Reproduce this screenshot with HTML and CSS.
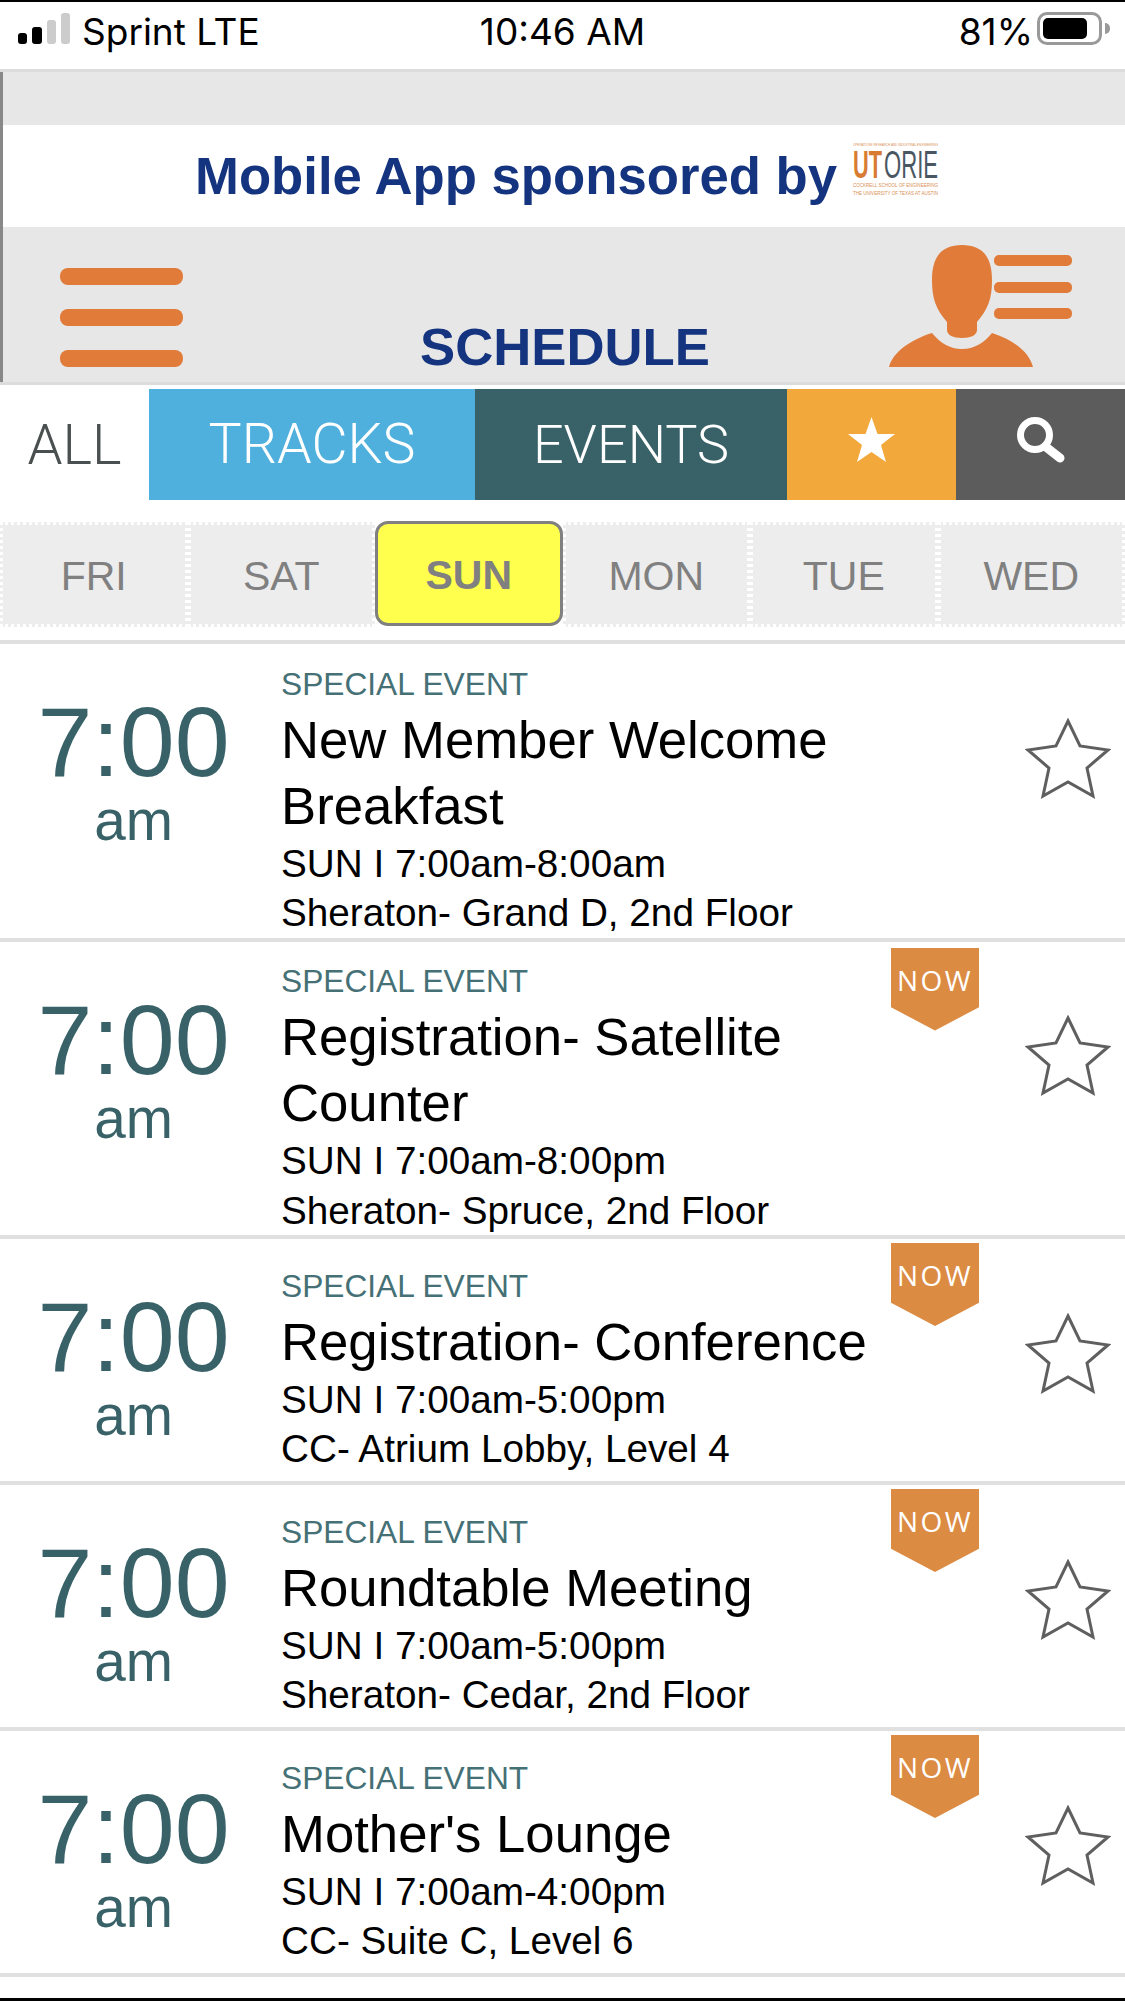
FILE: index.html
```html
<!DOCTYPE html>
<html lang="en">
<head>
<meta charset="utf-8">
<title>Schedule</title>
<link rel="stylesheet" href="styles.css">
</head>
<body>
<svg class="defs" width="0" height="0" aria-hidden="true">
  <symbol id="star" viewBox="0 0 86 81"><polygon points="43,3 55,28 83,32 62,50 68,78 43,64 18,78 24,50 3,32 31,28" fill="#fff" stroke="#5f5f5f" stroke-width="3" stroke-linejoin="miter"/></symbol>
</svg>
<div class="phone">
  <div class="status">
    <div class="status-left">
      <div class="signal"><i class="b1"></i><i class="b2"></i><i class="b3"></i><i class="b4"></i></div>
      <span>Sprint LTE</span>
    </div>
    <div class="status-time">10:46 AM</div>
    <div class="status-right">
      <span>81%</span>
      <div class="battery"><div class="battery-fill"></div></div>
      <div class="battery-nub"></div>
    </div>
  </div>

  <header class="header">
    <div class="strip"></div>
    <div class="banner">
      <span class="banner-text">Mobile App sponsored by</span>
      <svg class="logo" viewBox="0 0 85 53" width="85" height="53">
        <text class="logo-tiny" x="0" y="3" textLength="85" lengthAdjust="spacingAndGlyphs">OPERATIONS RESEARCH AND INDUSTRIAL ENGINEERING</text>
        <text class="logo-ut" x="0" y="35" textLength="29" lengthAdjust="spacingAndGlyphs">UT</text>
        <text class="logo-orie" x="31" y="35" textLength="54" lengthAdjust="spacingAndGlyphs">ORIE</text>
        <text class="logo-small" x="0" y="44" textLength="85" lengthAdjust="spacingAndGlyphs">COCKRELL SCHOOL OF ENGINEERING</text>
        <text class="logo-small" x="0" y="52" textLength="85" lengthAdjust="spacingAndGlyphs">THE UNIVERSITY OF TEXAS AT AUSTIN</text>
      </svg>
    </div>
    <nav class="nav">
      <div class="burger"><i></i><i></i><i></i></div>
      <h1 class="page-title">SCHEDULE</h1>
      <svg class="person" viewBox="889 245 184 122" width="184" height="122">
        <path fill="#e07b39" d="M962 245C981 245 992 255 992 280C992 299 988 309 977 322L977 330C977 335 971 338 962 338C953 338 947 335 947 330L947 322C936 309 932 299 932 280C932 255 943 245 962 245Z"/>
        <path fill="#e07b39" d="M889 367C893 352 910 340 932 333C940 343 950 349 962 349C974 349 984 343 992 333C1014 340 1029 352 1033 367Z"/>
        <rect x="994" y="255" width="78" height="11" rx="5" fill="#e07b39"/>
        <rect x="994" y="282" width="78" height="11" rx="5" fill="#e07b39"/>
        <rect x="994" y="308" width="78" height="11" rx="5" fill="#e07b39"/>
      </svg>
    </nav>
  </header>

  <div class="tabs">
    <div class="tab tab-all">ALL</div>
    <div class="tab tab-tracks">TRACKS</div>
    <div class="tab tab-events">EVENTS</div>
    <div class="tab tab-fav">
      <svg class="tab-icon" viewBox="0 0 47 45" width="47" height="45"><polygon fill="#fff" points="23.500,0 29.500,17 47,17 33,28 38,45 23.500,35 9,45 14,28 0,17 17.500,17"/></svg>
    </div>
    <div class="tab tab-search">
      <svg class="tab-icon" viewBox="0 0 52 46" width="52" height="46"><circle cx="20" cy="18" r="14.500" fill="none" stroke="#fff" stroke-width="7"/><path d="M31 30L45 41" fill="none" stroke="#fff" stroke-width="9" stroke-linecap="round"/></svg>
    </div>
  </div>

  <div class="days">
    <div class="day">FRI</div>
    <div class="day">SAT</div>
    <div class="day day-active">SUN</div>
    <div class="day">MON</div>
    <div class="day">TUE</div>
    <div class="day">WED</div>
  </div>

  <main class="list">
    <article class="row">
      <div class="time"><div class="time-h">7:00</div><div class="time-ap">am</div></div>
      <div class="info">
        <div class="cat">SPECIAL EVENT</div>
        <div class="name">New Member Welcome Breakfast</div>
        <div class="meta">SUN I 7:00am-8:00am</div>
        <div class="meta">Sheraton- Grand D, 2nd Floor</div>
      </div>
      <svg class="fav" width="86" height="81"><use href="#star"/></svg>
    </article>
    <article class="row row-tall">
      <div class="now"><span>NOW</span></div>
      <div class="time"><div class="time-h">7:00</div><div class="time-ap">am</div></div>
      <div class="info">
        <div class="cat">SPECIAL EVENT</div>
        <div class="name">Registration- Satellite Counter</div>
        <div class="meta">SUN I 7:00am-8:00pm</div>
        <div class="meta">Sheraton- Spruce, 2nd Floor</div>
      </div>
      <svg class="fav" width="86" height="81"><use href="#star"/></svg>
    </article>
    <article class="row">
      <div class="now"><span>NOW</span></div>
      <div class="time"><div class="time-h">7:00</div><div class="time-ap">am</div></div>
      <div class="info">
        <div class="cat">SPECIAL EVENT</div>
        <div class="name">Registration- Conference</div>
        <div class="meta">SUN I 7:00am-5:00pm</div>
        <div class="meta">CC- Atrium Lobby, Level 4</div>
      </div>
      <svg class="fav" width="86" height="81"><use href="#star"/></svg>
    </article>
    <article class="row">
      <div class="now"><span>NOW</span></div>
      <div class="time"><div class="time-h">7:00</div><div class="time-ap">am</div></div>
      <div class="info">
        <div class="cat">SPECIAL EVENT</div>
        <div class="name">Roundtable Meeting</div>
        <div class="meta">SUN I 7:00am-5:00pm</div>
        <div class="meta">Sheraton- Cedar, 2nd Floor</div>
      </div>
      <svg class="fav" width="86" height="81"><use href="#star"/></svg>
    </article>
    <article class="row">
      <div class="now"><span>NOW</span></div>
      <div class="time"><div class="time-h">7:00</div><div class="time-ap">am</div></div>
      <div class="info">
        <div class="cat">SPECIAL EVENT</div>
        <div class="name">Mother's Lounge</div>
        <div class="meta">SUN I 7:00am-4:00pm</div>
        <div class="meta">CC- Suite C, Level 6</div>
      </div>
      <svg class="fav" width="86" height="81"><use href="#star"/></svg>
    </article>
  </main>
</div>
</body>
</html>
```
FILE: styles.css
```css
* { box-sizing: border-box; }
html, body { margin: 0; padding: 0; background: #fff; }
body { font-family: "Liberation Sans", Arial, sans-serif; }
.defs { position: absolute; }
.phone {
  width: 1125px;
  height: 2001px;
  overflow: hidden;
  display: flex;
  flex-direction: column;
  border-top: 2px solid #000;
  border-bottom: 3px solid #000;
}

/* status bar */
.status {
  height: 67px;
  display: grid;
  grid-template-columns: 1fr auto 1fr;
  align-items: start;
  font-family: Inter, "Liberation Sans", sans-serif;
  font-size: 37px;
  line-height: 40px;
  color: #000;
  padding-top: 10px;
  flex: none;
}
.status-left { display: flex; align-items: flex-start; padding-left: 18px; gap: 12px; }
.signal { display: flex; align-items: flex-end; gap: 5px; height: 31px; margin-top: 1px; }
.signal i { display: block; width: 9px; border-radius: 3px; background: #000; }
.signal .b1 { height: 11px; }
.signal .b2 { height: 17px; width: 10px; }
.signal .b3 { height: 24px; background: #ccc; }
.signal .b4 { height: 31px; background: #ccc; }
.status-time { text-align: center; }
.status-right { display: flex; justify-content: flex-end; align-items: flex-start; padding-right: 15px; }
.battery {
  width: 65px;
  height: 33px;
  margin: 0 0 0 4px;
  border: 3px solid #999;
  border-radius: 10px;
  padding: 3px;
}
.battery-fill { width: 44px; height: 21px; background: #000; border-radius: 5px; }
.battery-nub { width: 5px; height: 11px; margin: 11px 0 0 3px; background: #999; border-radius: 0 5px 5px 0; }

/* header */
.header {
  flex: none;
  border-top: 3px solid #dcdcdc;
  border-bottom: 3px solid #dcdcdc;
  background: #e7e7e7;
  position: relative;
}
.header::before {
  content: "";
  position: absolute;
  left: 0;
  top: 0;
  bottom: 0;
  width: 3px;
  background: #888;
}
.strip { height: 53px; }
.banner {
  height: 102px;
  background: #fff;
  display: flex;
  align-items: flex-start;
  padding: 18px 0 0 195px;
  gap: 16px;
}
.banner-text {
  font-size: 52.700px;
  line-height: 60px;
  margin-top: 3px;
  font-weight: 700;
  color: #15347f;
  white-space: nowrap;
}
.logo { display: block; flex: none; overflow: visible; }
.logo-tiny { font-size: 3.500px; fill: #d98f55; font-family: "Liberation Sans", sans-serif; }
.logo-ut { font-size: 39px; font-weight: 700; fill: #d87c33; font-family: "Liberation Sans", sans-serif; }
.logo-orie { font-size: 39px; fill: #4a5763; font-family: "Liberation Sans", sans-serif; }
.logo-small { font-size: 5.500px; fill: #d98f55; font-family: "Liberation Sans", sans-serif; }
.nav {
  height: 155px;
  display: grid;
  grid-template-columns: 1fr auto 1fr;
  align-items: end;
  position: relative;
  padding-bottom: 15px;
}
.burger {
  display: flex;
  flex-direction: column;
  gap: 24px;
  margin-left: 60px;
  width: 123px;
}
.burger i { display: block; height: 17px; border-radius: 8px; background: #e07b39; }
.page-title {
  margin: 0 0 0 5px;
  font-size: 52.700px;
  font-weight: 700;
  line-height: 40px;
  color: #15347f;
}
.person { display: block; justify-self: end; margin-right: 52px; }

/* tabs */
.tabs { flex: none; display: grid; grid-template-columns: 149px 326px 312px 169px 169px; height: 111px; margin-top: 4px; }
.tab {
  display: flex;
  align-items: center;
  justify-content: center;
  font-family: Roboto, "Liberation Sans", sans-serif;
  font-weight: 300;
  font-size: 54px;
  color: #fff;
}
.tab-icon { margin-bottom: 10px; }
.tab-all { color: #4a4f50; font-size: 56px; }
.tab-tracks { background: #4fb0de; font-size: 55.500px; }
.tab-events { background: #386268; }
.tab-fav { background: #f2a83b; }
.tab-search { background: #5c5c5c; }

/* days */
.days { flex: none; display: grid; grid-template-columns: repeat(6, 1fr); height: 105px; margin-top: 22px; }
.day {
  display: flex;
  align-items: center;
  justify-content: center;
  padding-top: 4px;
  background: #ededed;
  border: 3px dotted #fff;
  font-size: 41px;
  color: #808080;
}
.day-active {
  background: #ffff4d;
  border: 3px solid #808080;
  border-radius: 13px;
  font-weight: 700;
  margin: -1px 0 1px;
}

/* list */
.list { flex: none; margin-top: 13px; border-top: 4px solid #e0e0e0; }
.row {
  position: relative;
  display: grid;
  grid-template-columns: 281px 1fr 86px;
  min-height: 246px;
  padding: 20.500px 14px 0 0;
  border-bottom: 4px solid #e0e0e0;
  align-items: center;
}
.time { align-self: start; text-align: center; color: #386268; margin-top: 29.500px; padding-right: 14px; }
.time-h { font-size: 98.700px; line-height: 96px; }
.time-ap { font-size: 56.700px; line-height: 56px; margin-top: 3px; }
.info { min-width: 0; padding-right: 120px; }
.cat { font-size: 31.700px; line-height: 38px; margin-bottom: 4px; color: #457176; }
.name { font-size: 52.700px; line-height: 66px; color: #000; }
.meta { font-size: 38.700px; line-height: 49.500px; color: #000; }
.fav { align-self: start; margin-top: 53px; }
.now {
  position: absolute;
  top: 4px;
  left: 891px;
  width: 88px;
  height: 83px;
  background: #dc8b43;
  clip-path: polygon(0 0, 100% 0, 100% 72%, 50% 100%, 0 72%);
  color: #fff;
  text-align: center;
  font-family: "Open Sans", "Liberation Sans", sans-serif;
  font-size: 28px;
  line-height: 64px;
  letter-spacing: 2.500px;
}
.row-tall .now { top: 6px; }
```
